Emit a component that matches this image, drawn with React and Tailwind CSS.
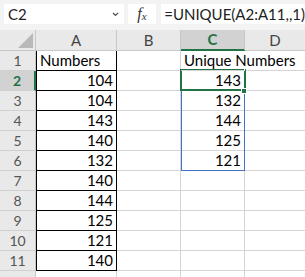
import React from 'react'

const colsA = ['Numbers', 104, 104, 143, 140, 132, 140, 144, 125, 121, 140]
const colsC = ['Unique Numbers', 143, 132, 144, 125, 121]

const font = { fontFamily: 'Lato, "Open Sans", sans-serif' }

function Cell({ children, className = 'border-[#d4d4d4]', right }) {
  return (
    <div
      className={`h-[20px] border-r border-b text-[15px] leading-[19px] text-black px-[3px] whitespace-nowrap ${right ? 'text-right' : ''} ${className}`}
    >
      {children}
    </div>
  )
}

export default function App() {
  const rows = Array.from({ length: 12 }, (_, i) => i + 1)
  return (
    <div className="w-[305px] h-[277px] overflow-hidden bg-white relative" style={font}>
      {/* formula bar */}
      <div className="h-[30px] bg-[#f3f3f3] flex items-start pt-[4px] pl-[4px]">
        <div className="w-[122px] h-[20px] bg-white flex items-center justify-between pl-[4px] pr-[5px] text-[15px] text-[#222]">
          <span>C2</span>
          <svg width="7" height="5" viewBox="0 0 7 5"><path d="M1 1 L3.5 3.5 L6 1" stroke="#555" strokeWidth="1.2" fill="none" /></svg>
        </div>
        <div className="ml-[4px] w-[29px] h-[20px] bg-white flex items-center justify-center text-[#333]" style={{ fontFamily: '"Liberation Serif", serif' }}>
          <i className="text-[16px] leading-none">f</i>
          <i className="text-[11px] leading-none mt-[4px]">x</i>
        </div>
        <div className="ml-[5px] flex-1 h-[20px] bg-white pl-[3px] text-[15px] leading-[20px] text-[#222] whitespace-nowrap">
          =UNIQUE(A2:A11,,1)
        </div>
      </div>

      {/* column headers */}
      <div className="flex h-[21px] bg-[#e9e9e9] text-[15px] text-[#444]">
        <div className="w-[36px] border-r border-b border-[#c8c8c8] relative">
          <svg className="absolute left-[18px] top-[3px]" width="15" height="15" viewBox="0 0 15 15"><path d="M15 0 L15 15 L0 15 Z" fill="#b9b9b9" /></svg>
        </div>
        <div className="w-[81px] border-r border-b border-[#c8c8c8] flex items-center justify-center">A</div>
        <div className="w-[64px] border-r border-b border-[#c8c8c8] flex items-center justify-center">B</div>
        <div className="w-[64px] bg-[#d2d2d2] border-r border-[#c8c8c8] border-b-2 border-b-[#217346] flex items-center justify-center font-bold text-[#217346]">C</div>
        <div className="w-[60px] border-b border-[#c8c8c8] flex items-center justify-center">D</div>
      </div>

      {/* grid */}
      <div className="flex">
        <div className="w-[36px] flex flex-col">
          {rows.map(r => (
            <div
              key={r}
              className={`h-[20px] border-b border-[#d0d0d0] flex items-center justify-center text-[14px] ${r === 2 ? 'bg-[#d2d2d2] text-[#217346] font-bold border-r-2 border-r-[#217346]' : 'bg-[#e9e9e9] text-[#555] border-r border-r-[#c8c8c8]'}`}
            >
              {r < 12 ? r : ''}
            </div>
          ))}
        </div>
        <div className="w-[81px] flex flex-col">
          {rows.map((r, i) => (
            <Cell
              key={r}
              right={i > 0}
              className={i < 11 ? 'border-black border-l' : 'border-[#d4d4d4]'}
            >
              {colsA[i] ?? ''}
            </Cell>
          ))}
        </div>
        <div className="w-[64px] flex flex-col">
          {rows.map(r => <Cell key={r} />)}
        </div>
        <div className="w-[64px] flex flex-col relative">
          {rows.map((r, i) => (
            <Cell key={r} right={i > 0} className={i === 0 ? 'overflow-visible relative z-10 border-b-[#d4d4d4] border-r-white' : 'border-[#d4d4d4]'}>
              {colsC[i] ?? ''}
            </Cell>
          ))}
          {/* spill range */}
          <div className="absolute left-0 top-[19px] w-[64px] h-[101px] border border-[#4472c4] pointer-events-none" />
          {/* active cell */}
          <div className="absolute left-[-1px] top-[18px] w-[66px] h-[22px] border-2 border-[#217346] pointer-events-none" />
          <div className="absolute left-[60px] top-[37px] w-[6px] h-[6px] bg-[#217346] border border-white" />
        </div>
        <div className="w-[60px] flex flex-col">
          {rows.map(r => <Cell key={r} className="border-r-0 border-[#d4d4d4]" />)}
        </div>
      </div>
    </div>
  )
}
